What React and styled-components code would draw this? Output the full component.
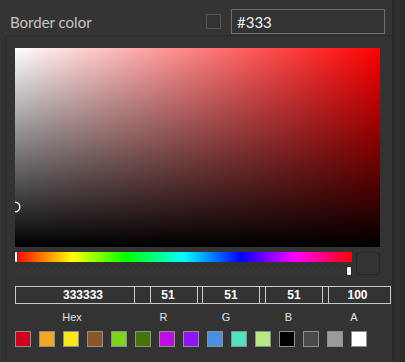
import styled, { createGlobalStyle } from "styled-components";

const GlobalStyle = createGlobalStyle`
  html, body {
    margin: 0;
    padding: 0;
    background: #343434;
  }
  * {
    box-sizing: border-box;
  }
`;

const presetColors = [
  "#D0021B",
  "#F5A623",
  "#F8E71C",
  "#8B572A",
  "#7ED321",
  "#417505",
  "#BD10E0",
  "#9013FE",
  "#4A90E2",
  "#50E3C2",
  "#B8E986",
  "#000000",
  "#4A4A4A",
  "#9B9B9B",
  "#FFFFFF",
];

const fields = [
  { label: "Hex", value: "333333", width: 120, pl: 0, pad: "0 0 0 16px" },
  { label: "R", value: "51", width: 63, pl: 15, pad: "0 12px 0 0" },
  { label: "G", value: "51", width: 62, pl: 4, pad: "0" },
  { label: "B", value: "51", width: 63, pl: 5, pad: "0" },
  { label: "A", value: "100", width: 68, pl: 5, pad: "0 4px 0 0" },
];

const Page = styled("div")({
  display: "flex",
  height: 362,
  overflow: "hidden",
});

const Main = styled("div")({
  width: 392,
  flexShrink: 0,
});

const ScrollStrip = styled("div")({
  flex: 1,
  borderLeft: "2px solid #282828",
  background: "#303030",
  display: "flex",
  justifyContent: "flex-end",
});

const ScrollTrack = styled("div")({
  width: 5,
  background: "#2b2b2b",
});

const Header = styled("div")({
  height: 35,
  paddingTop: 8,
  paddingLeft: 10,
  display: "flex",
  alignItems: "center",
});

const HeaderLabel = styled("span")({
  fontFamily: "Lato, 'Open Sans', sans-serif",
  fontSize: 15,
  color: "#c6c6c6",
  flex: 1,
});

const ColorChip = styled("div")({
  width: 15,
  height: 15,
  border: "1px solid #555",
  background: "#333",
  marginRight: 10,
});

const ColorInput = styled("input")({
  width: 154,
  height: 25,
  marginRight: 7,
  border: "1px solid #6c6c6c",
  background: "#333",
  color: "#f0f0f0",
  fontFamily: "Lato, 'Open Sans', sans-serif",
  fontSize: 15,
  padding: "0 0 0 5px",
  outline: "none",
});

const Panel = styled("div")({
  marginLeft: 5,
  width: 388,
  height: 400,
  border: "1px solid #2a2a2a",
  borderRadius: 3,
  background: "#333",
  padding: "12px 12px 0 9px",
});

const Saturation = styled("div")({
  position: "relative",
  height: 199,
  overflow: "hidden",
  background: "hsl(0, 100%, 50%)",
  "&::before": {
    content: "''",
    position: "absolute",
    inset: 0,
    background: "linear-gradient(to right, #fff, rgba(255,255,255,0))",
  },
  "&::after": {
    content: "''",
    position: "absolute",
    inset: 0,
    background: "linear-gradient(to top, #000, rgba(0,0,0,0))",
  },
});

const SatPointer = styled("div")({
  position: "absolute",
  zIndex: 2,
  width: 8,
  height: 8,
  borderRadius: "50%",
  transform: "translate(-4px, -4px)",
  boxShadow: "0 0 0 1.5px #fff, inset 0 0 1px 1px rgba(0,0,0,0.3)",
});

const Controls = styled("div")({
  display: "flex",
  gap: 4,
  marginTop: 5,
});

const Sliders = styled("div")({
  flex: 1,
});

const HueBar = styled("div")({
  position: "relative",
  height: 10,
  background:
    "linear-gradient(to right, #f00 0%, #ff0 17%, #0f0 33%, #0ff 50%, #00f 67%, #f0f 83%, #f00 100%)",
});

const AlphaBar = styled("div")({
  position: "relative",
  height: 9,
  marginTop: 5,
  background:
    "repeating-conic-gradient(rgba(255,255,255,0.015) 0% 25%, transparent 0% 50%) 0 0 / 6px 6px",
});

const SliderThumb = styled("div")`
  position: absolute;
  top: ${(p) => p.$top || 0}px;
  left: ${(p) => p.$left};
  width: ${(p) => p.$w}px;
  height: ${(p) => p.$h};
  background: #fff;
  border-radius: 1px;
  box-shadow: 0 0 2px rgba(0, 0, 0, 0.6);
`;

const Preview = styled("div")({
  width: 24,
  height: 23,
  border: "1px solid #272727",
  borderRadius: 3,
  background: "#333",
});

const FieldsRow = styled("div")({
  display: "flex",
  width: 376,
  marginTop: 10,
});

const FieldColumn = styled("div")`
  width: ${(p) => p.$width}px;
  display: flex;
  flex-direction: column;
`;

const InputWrap = styled("div")`
  height: 18px;
  padding-left: ${(p) => p.$pl}px;
  border-top: 1px solid #c9c9c9;
  border-bottom: 1px solid #c9c9c9;
`;

const FieldInput = styled("input")`
  display: block;
  width: 100%;
  height: 16px;
  border: none;
  border-left: 1px solid #c9c9c9;
  border-right: 1px solid #c9c9c9;
  background: transparent;
  color: #fff;
  font-family: "Liberation Sans", Arial, sans-serif;
  font-size: 12px;
  font-weight: bold;
  text-align: center;
  padding: ${(p) => p.$pad};
  outline: none;
`;

const FieldLabel = styled("div")`
  margin-top: 6px;
  line-height: 14px;
  padding-right: 6px;
  text-align: center;
  font-family: "Liberation Sans", Arial, sans-serif;
  font-size: 11px;
  color: #e2e2e2;
`;

const Swatches = styled("div")({
  display: "flex",
  gap: 8,
  marginTop: 7,
});

const Swatch = styled("div")`
  width: 16px;
  height: 16px;
  background: ${(p) => p.$color};
  border: 1px solid #8e8e8e;
`;

export default function App() {
  return (
    <>
      <GlobalStyle />
      <Page>
        <Main>
          <Header>
            <HeaderLabel>Border color</HeaderLabel>
            <ColorChip />
            <ColorInput defaultValue="#333" />
          </Header>
          <Panel>
            <Saturation>
              <SatPointer style={{ left: "0%", top: "80%" }} />
            </Saturation>
            <Controls>
              <Sliders>
                <HueBar>
                  <SliderThumb $left="0px" $w={2} $h="100%" />
                </HueBar>
                <AlphaBar>
                  <SliderThumb $left="calc(100% - 5px)" $w={4} $h="8px" $top={0} />
                </AlphaBar>
              </Sliders>
              <Preview />
            </Controls>
            <FieldsRow>
              {fields.map((f) => (
                <FieldColumn key={f.label} $width={f.width}>
                  <InputWrap $pl={f.pl}>
                    <FieldInput defaultValue={f.value} $pad={f.pad} />
                  </InputWrap>
                  <FieldLabel>{f.label}</FieldLabel>
                </FieldColumn>
              ))}
            </FieldsRow>
            <Swatches>
              {presetColors.map((c) => (
                <Swatch key={c} $color={c} />
              ))}
            </Swatches>
          </Panel>
        </Main>
        <ScrollStrip>
          <ScrollTrack />
        </ScrollStrip>
      </Page>
    </>
  );
}
